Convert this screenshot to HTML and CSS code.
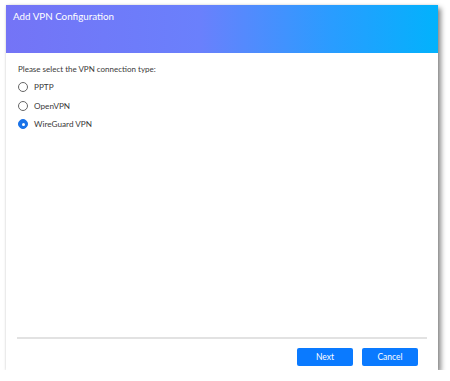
FILE: index.html
```html
<!DOCTYPE html>
<html>
<head>
<meta charset="utf-8">
<link rel="stylesheet" href="styles.css">
</head>
<body>
<div class="dialog">
  <div class="header">Add VPN Configuration</div>
  <div class="content">
    <p class="prompt">Please select the VPN connection type:</p>
    <label class="option"><span class="radio"></span>PPTP</label>
    <label class="option"><span class="radio"></span>OpenVPN</label>
    <label class="option"><span class="radio checked"></span>WireGuard VPN</label>
  </div>
  <div class="footer">
    <div class="divider"></div>
    <div class="actions">
      <button class="btn">Next</button>
      <button class="btn">Cancel</button>
    </div>
  </div>
</div>
</body>
</html>
```
FILE: styles.css
```css
html, body {
  margin: 0;
  padding: 0;
  background: #ffffff;
}
body {
  font-family: "Lato", "Noto Sans", sans-serif;
  color: #3a3a3a;
}
.dialog {
  margin: 5px 0 0 6px;
  width: 432px;
  height: 365px;
  background: #fff;
  box-shadow: 3px 3px 5px rgba(0, 0, 0, 0.45), 0 0 2px rgba(0,0,0,0.12);
  display: flex;
  flex-direction: column;
}
.header {
  height: 48px;
  box-sizing: border-box;
  padding: 4px 0 0 7px;
  color: #fff;
  font-size: 9.8px;
  line-height: 14px;
  background: linear-gradient(90deg, #7474f6 0%, #6a80fc 45%, #2a9cff 75%, #02b2fc 100%);
}
.content {
  flex: 1;
  padding: 10px 0 0 12px;
}
.prompt {
  margin: 0 0 3px 0;
  font-size: 8px;
  line-height: 12px;
  color: #3a3a3a;
}
.option {
  display: flex;
  align-items: center;
  height: 18.5px;
  font-size: 8.2px;
  color: #3a3a3a;
}
.radio {
  width: 8px;
  height: 8px;
  border: 1px solid #666;
  border-radius: 50%;
  margin: 0 6px 0 0;
  box-sizing: content-box;
  position: relative;
}
.radio.checked {
  border-color: #1a73e8;
  background: #1a73e8;
}
.radio.checked::after {
  content: "";
  position: absolute;
  left: 2.5px;
  top: 2.5px;
  width: 3px;
  height: 3px;
  border-radius: 50%;
  background: #fff;
}
.footer {
  padding: 0 11px 4px 11px;
}
.divider {
  height: 2px;
  background: #e2e2e2;
  margin-bottom: 9px;
}
.actions {
  display: flex;
  justify-content: flex-end;
  gap: 9px;
  padding-right: 9px;
}
.btn {
  width: 56px;
  height: 18px;
  border: none;
  border-radius: 2px;
  background: #0a7aff;
  color: #fff;
  font-family: "Lato", "Noto Sans", sans-serif;
  font-size: 8.5px;
  padding: 0;
}
```
